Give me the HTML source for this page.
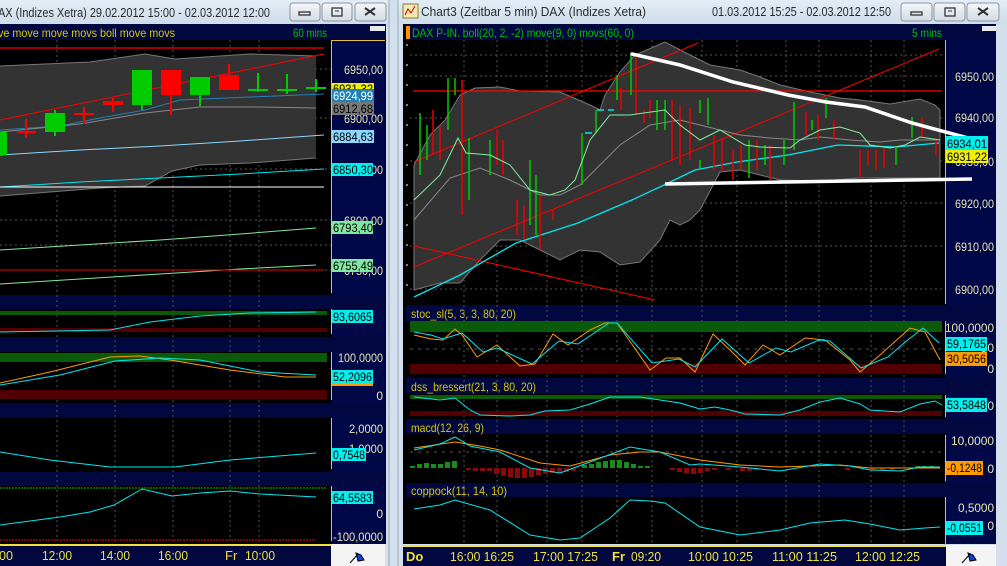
<!DOCTYPE html>
<html><head><meta charset="utf-8"><style>
html,body{margin:0;padding:0;width:1007px;height:566px;overflow:hidden;background:#d3dfec;}
svg{display:block;font-family:"Liberation Sans",sans-serif;}
</style></head><body>
<svg width="1007" height="566" viewBox="0 0 1007 566" xmlns="http://www.w3.org/2000/svg">
<defs>
<linearGradient id="tb" x1="0" y1="0" x2="0" y2="1"><stop offset="0" stop-color="#e4ecf6"/><stop offset="1" stop-color="#cfdcea"/></linearGradient>
<linearGradient id="btn" x1="0" y1="0" x2="0" y2="1"><stop offset="0" stop-color="#f4f6f9"/><stop offset="1" stop-color="#d4dbe4"/></linearGradient>
</defs>
<rect x="0" y="0" width="1007" height="566" fill="#d3dfec"/>
<rect x="0" y="0" width="389" height="23" fill="url(#tb)"/>
<rect x="398" y="0" width="609" height="23" fill="url(#tb)"/>
<line x1="389" y1="0" x2="389" y2="566" stroke="#9aa9bb"/>
<line x1="398" y1="0" x2="398" y2="566" stroke="#9aa9bb"/>
<!-- left title -->
<text x="-2" y="17" font-size="13" fill="#2a2a2a" textLength="272" lengthAdjust="spacingAndGlyphs">AX (Indizes Xetra) 29.02.2012 15:00 - 02.03.2012 12:00</text>
<g stroke="#8a96a6" fill="url(#btn)"><rect x="290" y="3" width="30" height="18" rx="3"/><rect x="322" y="3" width="30" height="18" rx="3"/><rect x="355" y="3" width="31" height="18" rx="3"/></g>
<rect x="299" y="12" width="11" height="3" fill="none" stroke="#333" stroke-width="1.3"/>
<rect x="332" y="8" width="10" height="8" fill="none" stroke="#333" stroke-width="1.3"/><line x1="335" y1="11" x2="339" y2="11" stroke="#333"/>
<path d="M365 8l10 7M375 8l-10 7" stroke="#333" stroke-width="2"/>
<!-- right title -->
<rect x="403" y="4" width="15" height="14" fill="#f3ecb0" stroke="#8a7a30"/><path d="M405 15l3-6 3 4 4-7" stroke="#c00" fill="none"/>
<text x="421" y="16" font-size="13" fill="#2a2a2a" textLength="225" lengthAdjust="spacingAndGlyphs">Chart3 (Zeitbar 5 min)  DAX (Indizes Xetra)</text>
<text x="712" y="16" font-size="13" fill="#2a2a2a" textLength="179" lengthAdjust="spacingAndGlyphs">01.03.2012 15:25 - 02.03.2012 12:50</text>
<g stroke="#8a96a6" fill="url(#btn)"><rect x="901" y="3" width="31" height="18" rx="3"/><rect x="934" y="3" width="31" height="18" rx="3"/><rect x="967" y="3" width="32" height="18" rx="3"/></g>
<rect x="911" y="12" width="11" height="3" fill="none" stroke="#333" stroke-width="1.3"/>
<rect x="945" y="8" width="10" height="8" fill="none" stroke="#333" stroke-width="1.3"/><line x1="948" y1="11" x2="952" y2="11" stroke="#333"/>
<path d="M978 8l10 7M988 8l-10 7" stroke="#333" stroke-width="2"/>

<!-- ========== LEFT WINDOW ========== -->
<rect x="0" y="24" width="386" height="520" fill="#000"/>
<rect x="0" y="24" width="386" height="16" fill="#00083f"/>
<text x="-2" y="37" font-size="12" fill="#d8c800" textLength="177" lengthAdjust="spacingAndGlyphs">ve move move movs boll move movs</text>
<text x="293" y="37" font-size="12" fill="#00c000" textLength="34" lengthAdjust="spacingAndGlyphs">60 mins</text>
<rect x="370" y="26" width="15" height="5" fill="#e8e8e8"/>
<rect x="331" y="40" width="54" height="504" fill="#000848"/>
<g stroke="#e8c040"><line x1="331.5" y1="40" x2="331.5" y2="293"/><line x1="331.5" y1="309" x2="331.5" y2="334"/><line x1="331.5" y1="352" x2="331.5" y2="400"/><line x1="331.5" y1="418" x2="331.5" y2="469"/><line x1="331.5" y1="486" x2="331.5" y2="541"/><line x1="331" y1="40.5" x2="385" y2="40.5"/></g>
<g fill="#00083f"><rect x="0" y="295" width="385" height="14"/><rect x="0" y="337" width="385" height="15"/><rect x="0" y="403" width="385" height="15"/><rect x="0" y="472" width="385" height="14"/></g>
<g stroke="#555" stroke-dasharray="2,3"><line x1="57" y1="40" x2="57" y2="541"/><line x1="115" y1="40" x2="115" y2="541"/><line x1="173" y1="40" x2="173" y2="541"/><line x1="230" y1="40" x2="230" y2="541"/><line x1="259" y1="40" x2="259" y2="541"/>
<line x1="0" y1="69" x2="331" y2="69"/><line x1="0" y1="118" x2="331" y2="118"/><line x1="0" y1="169" x2="331" y2="169"/><line x1="0" y1="220" x2="331" y2="220"/><line x1="0" y1="245" x2="331" y2="245"/><line x1="0" y1="270" x2="331" y2="270"/></g>
<path d="M0 66 L90 62 L145 54 L175 59 L250 54 L316 56 L316 158 L250 163 L200 165 L172 171 L145 186 L100 188 L50 192 L0 196 Z" fill="#333"/>
<polyline points="0,66 90,62 145,54 175,59 250,54 316,56" fill="none" stroke="#777"/>
<polyline points="316,158 250,163 200,165 172,171 145,186 100,188 50,192 0,196" fill="none" stroke="#777"/>
<line x1="0" y1="48" x2="324" y2="48" stroke="#f00" stroke-width="1.3"/>
<line x1="0" y1="120" x2="324" y2="54" stroke="#f00"/>
<polyline points="0,130 60,126 100,118 145,110 180,100 250,97 324,94" fill="none" stroke="#1e82b8"/>
<polyline points="0,132 80,124 145,113 200,107 260,107 316,108" fill="none" stroke="#888"/>
<polyline points="0,155 80,150 160,146 240,141 324,135" fill="none" stroke="#8ad8ff"/>
<polyline points="0,187 80,182 160,178 240,174 324,169" fill="none" stroke="#00e8f0"/>
<line x1="0" y1="187" x2="324" y2="187" stroke="#fff"/>
<polyline points="0,250 80,245 160,240 240,234 316,228" fill="none" stroke="#80e8a0"/>
<polyline points="0,284 80,279 160,274 240,269 316,265" fill="none" stroke="#80e8a0"/>
<line x1="0" y1="270" x2="324" y2="270" stroke="#e00"/>
<g fill="#00cc00"><rect x="0" y="132" width="7" height="23"/><rect x="45" y="113" width="20" height="19"/><rect x="132" y="70" width="20" height="35"/><rect x="190" y="77" width="20" height="18"/></g>
<g fill="#f00"><rect x="161" y="70" width="20" height="25"/><rect x="219" y="75" width="20" height="15"/><rect x="103" y="101" width="20" height="4"/></g>
<g stroke="#f00" stroke-width="2"><line x1="17" y1="132" x2="36" y2="132"/><line x1="26" y1="119" x2="26" y2="138"/><line x1="74" y1="114" x2="94" y2="114"/><line x1="84" y1="107" x2="84" y2="124"/><line x1="113" y1="98" x2="113" y2="112"/><line x1="171" y1="95" x2="171" y2="115"/><line x1="229" y1="64" x2="229" y2="75"/></g>
<g stroke="#00cc00" stroke-width="2"><line x1="55" y1="110" x2="55" y2="136"/><line x1="142" y1="105" x2="142" y2="110"/><line x1="200" y1="95" x2="200" y2="106"/><line x1="248" y1="90" x2="268" y2="90"/><line x1="258" y1="73" x2="258" y2="92"/><line x1="277" y1="90" x2="297" y2="90"/><line x1="287" y1="74" x2="287" y2="94"/><line x1="306" y1="88" x2="326" y2="88"/><line x1="316" y1="79" x2="316" y2="92"/></g>
<g font-size="12" fill="#e8e4b0" text-anchor="end" lengthAdjust="spacingAndGlyphs"><text x="383" y="74" textLength="39" lengthAdjust="spacingAndGlyphs">6950,00</text><text x="383" y="123" textLength="39" lengthAdjust="spacingAndGlyphs">6900,00</text><text x="383" y="174" textLength="39" lengthAdjust="spacingAndGlyphs">6850,00</text><text x="383" y="225" textLength="39" lengthAdjust="spacingAndGlyphs">6800,00</text><text x="383" y="275" textLength="39" lengthAdjust="spacingAndGlyphs">6750,00</text></g>
<rect x="332" y="83" width="42" height="12" fill="#f0f000"/><text x="333" y="93" font-size="12" fill="#000" textLength="40" lengthAdjust="spacingAndGlyphs">6931,32</text>
<rect x="332" y="89" width="42" height="13" fill="#1e82b8"/><text x="333" y="100" font-size="12" fill="#fff" textLength="40" lengthAdjust="spacingAndGlyphs">6924,99</text>
<rect x="332" y="102" width="42" height="13" fill="#777"/><text x="333" y="113" font-size="12" fill="#000" textLength="40" lengthAdjust="spacingAndGlyphs">6912,68</text>
<rect x="332" y="130" width="42" height="13" fill="#8ad8ff"/><text x="333" y="141" font-size="12" fill="#000" textLength="40" lengthAdjust="spacingAndGlyphs">6884,63</text>
<rect x="332" y="163" width="41" height="13" fill="#00f0f0"/><text x="333" y="174" font-size="12" fill="#000" textLength="40" lengthAdjust="spacingAndGlyphs">6850,30</text>
<rect x="332" y="221" width="41" height="13" fill="#80e8a0"/><text x="333" y="232" font-size="12" fill="#000" textLength="40" lengthAdjust="spacingAndGlyphs">6793,40</text>
<rect x="332" y="259" width="41" height="13" fill="#80e8a0"/><text x="333" y="270" font-size="12" fill="#000" textLength="40" lengthAdjust="spacingAndGlyphs">6755,49</text>
<rect x="0" y="311" width="327" height="4" fill="#0a5a0a"/><rect x="0" y="328" width="327" height="4" fill="#500000"/>
<polyline points="0,332 110,330 150,322 200,316 250,313 316,312" fill="none" stroke="#00e8f0"/>
<rect x="332" y="310" width="41" height="13" fill="#00f0f0"/><text x="333" y="321" font-size="12" fill="#000" textLength="39" lengthAdjust="spacingAndGlyphs">93,6065</text>
<rect x="0" y="353" width="327" height="9" fill="#0a5a0a"/><rect x="0" y="390" width="327" height="9" fill="#500000"/>
<polyline points="0,383 50,372 110,357 140,356 170,360 230,370 285,377 316,377" fill="none" stroke="#ff9a00"/>
<polyline points="0,385 60,375 115,361 160,358 200,360 260,372 316,375" fill="none" stroke="#00e8f0"/>
<g font-size="12" fill="#e8e4b0" text-anchor="end"><text x="383" y="362" textLength="45" lengthAdjust="spacingAndGlyphs">100,0000</text><text x="383" y="400">0</text><text x="383" y="433" textLength="34" lengthAdjust="spacingAndGlyphs">2,0000</text><text x="383" y="453" textLength="34" lengthAdjust="spacingAndGlyphs">1,0000</text><text x="383" y="518">0</text><text x="383" y="541" textLength="50" lengthAdjust="spacingAndGlyphs">-100,0000</text></g>
<rect x="332" y="370" width="41" height="13" fill="#00f0f0"/><rect x="332" y="383" width="41" height="3" fill="#ff9a00"/><text x="333" y="381" font-size="12" fill="#000" textLength="39" lengthAdjust="spacingAndGlyphs">52,2096</text>
<polyline points="0,452 50,460 110,467 175,467 230,460 316,453" fill="none" stroke="#00e8f0"/>
<rect x="332" y="448" width="34" height="13" fill="#00f0f0"/><text x="333" y="459" font-size="12" fill="#000" textLength="32" lengthAdjust="spacingAndGlyphs">0,7548</text>
<line x1="0" y1="488" x2="327" y2="488" stroke="#0c0" stroke-dasharray="2,1"/><line x1="0" y1="540" x2="316" y2="540" stroke="#e00" stroke-dasharray="2,1"/>
<polyline points="0,525 60,517 90,512 114,505 142,489 172,496 200,493 230,491 260,494 316,497" fill="none" stroke="#00e8f0"/>
<rect x="332" y="491" width="41" height="13" fill="#00f0f0"/><text x="333" y="502" font-size="12" fill="#000" textLength="39" lengthAdjust="spacingAndGlyphs">64,5583</text>
<rect x="0" y="544" width="331" height="22" fill="#00083f"/><line x1="0" y1="545" x2="331" y2="545" stroke="#f0e040" stroke-width="2"/>
<g font-size="13" fill="#f0e040"><text x="-1" y="560" textLength="14" lengthAdjust="spacingAndGlyphs">00</text><text x="42" y="560" textLength="30" lengthAdjust="spacingAndGlyphs">12:00</text><text x="100" y="560" textLength="30" lengthAdjust="spacingAndGlyphs">14:00</text><text x="158" y="560" textLength="30" lengthAdjust="spacingAndGlyphs">16:00</text><text x="225" y="560">Fr</text><text x="245" y="560" textLength="30" lengthAdjust="spacingAndGlyphs">10:00</text></g>
<rect x="331" y="544" width="54" height="22" fill="#f4f4f4"/><path d="M350 563l8-9M356 553l5 2 3 5-6 1z" stroke="#000" fill="#1040e0"/>

<!-- ========== RIGHT WINDOW ========== -->
<rect x="403" y="24" width="593" height="520" fill="#000"/>
<rect x="406" y="24" width="590" height="16" fill="#00083f"/>
<rect x="406" y="26" width="4" height="13" fill="#ff9000"/>
<text x="412" y="37" font-size="12" fill="#00c000" textLength="222" lengthAdjust="spacingAndGlyphs">DAX P-IN. boll(20, 2, -2) move(9, 0) movs(60, 0)</text>
<text x="912" y="37" font-size="12" fill="#00c000" textLength="30" lengthAdjust="spacingAndGlyphs">5 mins</text>
<rect x="982" y="26" width="14" height="5" fill="#e8e8e8"/>
<rect x="945" y="40" width="51" height="504" fill="#000848"/>
<g stroke="#e8c040"><line x1="945.5" y1="40" x2="945.5" y2="304"/><line x1="945.5" y1="321" x2="945.5" y2="374"/><line x1="945.5" y1="395" x2="945.5" y2="417"/><line x1="945.5" y1="435" x2="945.5" y2="481"/><line x1="945.5" y1="497" x2="945.5" y2="545"/></g>
<g fill="#00083f"><rect x="406" y="305" width="590" height="16"/><rect x="406" y="378" width="590" height="16"/><rect x="406" y="419" width="590" height="15"/><rect x="406" y="483" width="590" height="14"/></g>
<g font-size="12" fill="#d8c800"><text x="411" y="318" textLength="105" lengthAdjust="spacingAndGlyphs">stoc_sl(5, 3, 3, 80, 20)</text><text x="411" y="391" textLength="125" lengthAdjust="spacingAndGlyphs">dss_bressert(21, 3, 80, 20)</text><text x="411" y="432" textLength="73" lengthAdjust="spacingAndGlyphs">macd(12, 26, 9)</text><text x="411" y="495" textLength="96" lengthAdjust="spacingAndGlyphs">coppock(11, 14, 10)</text></g>
<g stroke="#fff" stroke-dasharray="2,18"><line x1="407" y1="44" x2="407" y2="304"/></g>
<g stroke="#555" stroke-dasharray="2,3"><line x1="464" y1="40" x2="464" y2="545"/><line x1="497" y1="40" x2="497" y2="545"/><line x1="547" y1="40" x2="547" y2="545"/><line x1="582" y1="40" x2="582" y2="545"/><line x1="617" y1="40" x2="617" y2="545"/><line x1="652" y1="40" x2="652" y2="545"/><line x1="702" y1="40" x2="702" y2="545"/><line x1="737" y1="40" x2="737" y2="545"/><line x1="786" y1="40" x2="786" y2="545"/><line x1="819" y1="40" x2="819" y2="545"/><line x1="871" y1="40" x2="871" y2="545"/><line x1="904" y1="40" x2="904" y2="545"/>
<line x1="410" y1="55" x2="945" y2="55"/><line x1="410" y1="76" x2="945" y2="76"/><line x1="410" y1="118" x2="945" y2="118"/><line x1="410" y1="161" x2="945" y2="161"/><line x1="410" y1="203" x2="945" y2="203"/><line x1="410" y1="246" x2="945" y2="246"/><line x1="410" y1="289" x2="945" y2="289"/></g>
<path d="M414 165 L430 135 L445 120 L460 95 L475 88 L500 87 L520 91 L560 92 L590 105 L600 110 L605 95 L620 72 L635 55 L665 42 L690 55 L710 65 L740 70 L760 77 L780 85 L810 92 L840 98 L860 100 L890 104 L920 99 L935 105 L940 110 L940 178 L900 178 L860 178 L820 181 L780 180 L760 175 L740 170 L720 172 L700 210 L690 220 L680 225 L670 220 L660 240 L640 262 L620 265 L600 252 L580 250 L560 260 L540 250 L520 240 L500 240 L480 260 L460 283 L440 283 L414 290 Z" fill="#333" stroke="#777"/>
<line x1="413" y1="91" x2="942" y2="91" stroke="#f00" stroke-width="1.3"/>
<line x1="414" y1="162" x2="698" y2="43" stroke="#f00"/>
<line x1="414" y1="267" x2="939" y2="49" stroke="#f00"/>
<line x1="414" y1="246" x2="655" y2="300" stroke="#f00"/>
<polyline points="414,220 450,178 480,168 510,180 540,195 560,195 580,185 600,165 620,145 650,125 680,120 700,125 720,130 740,135 770,138 800,140 820,137 850,140 880,142 900,140 940,140" fill="none" stroke="#888"/>
<polyline points="414,297 460,275 516,243 578,223 632,200 664,185 695,170 737,162 788,155 838,145 896,147 939,143" fill="none" stroke="#00e8f0" stroke-width="1.3"/>
<g stroke="#00cc00" stroke-width="1.5"><line x1="420" y1="113" x2="420" y2="175"/><line x1="427" y1="125" x2="427" y2="160"/><line x1="448" y1="78" x2="448" y2="130"/><line x1="455" y1="78" x2="455" y2="95"/><line x1="469" y1="138" x2="469" y2="200"/><line x1="490" y1="140" x2="490" y2="175"/><line x1="530" y1="160" x2="530" y2="225"/><line x1="536" y1="175" x2="536" y2="235"/><line x1="582" y1="133" x2="582" y2="185"/><line x1="596" y1="110" x2="596" y2="133"/><line x1="617" y1="75" x2="617" y2="100"/><line x1="631" y1="55" x2="631" y2="95"/><line x1="657" y1="100" x2="657" y2="130"/><line x1="665" y1="100" x2="665" y2="130"/><line x1="700" y1="160" x2="700" y2="168"/><line x1="708" y1="98" x2="708" y2="125"/><line x1="700" y1="100" x2="700" y2="113"/><line x1="749" y1="140" x2="749" y2="178"/><line x1="765" y1="145" x2="765" y2="165"/><line x1="784" y1="140" x2="784" y2="165"/><line x1="794" y1="102" x2="794" y2="150"/><line x1="812" y1="120" x2="812" y2="130"/><line x1="826" y1="98" x2="826" y2="118"/><line x1="896" y1="148" x2="896" y2="165"/><line x1="912" y1="117" x2="912" y2="138"/></g>
<g stroke="#ee0000" stroke-width="1.5"><line x1="433" y1="110" x2="433" y2="155"/><line x1="440" y1="125" x2="440" y2="160"/><line x1="462" y1="80" x2="462" y2="215"/><line x1="497" y1="130" x2="497" y2="165"/><line x1="503" y1="140" x2="503" y2="175"/><line x1="517" y1="200" x2="517" y2="235"/><line x1="524" y1="205" x2="524" y2="240"/><line x1="540" y1="195" x2="540" y2="250"/><line x1="553" y1="210" x2="553" y2="220"/><line x1="621" y1="88" x2="621" y2="110"/><line x1="636" y1="58" x2="636" y2="115"/><line x1="644" y1="110" x2="644" y2="123"/><line x1="650" y1="100" x2="650" y2="118"/><line x1="672" y1="100" x2="672" y2="160"/><line x1="680" y1="105" x2="680" y2="165"/><line x1="690" y1="108" x2="690" y2="160"/><line x1="714" y1="135" x2="714" y2="170"/><line x1="722" y1="138" x2="722" y2="172"/><line x1="733" y1="150" x2="733" y2="180"/><line x1="741" y1="145" x2="741" y2="170"/><line x1="757" y1="140" x2="757" y2="170"/><line x1="770" y1="145" x2="770" y2="180"/><line x1="806" y1="112" x2="806" y2="135"/><line x1="818" y1="115" x2="818" y2="140"/><line x1="834" y1="120" x2="834" y2="140"/><line x1="860" y1="150" x2="860" y2="178"/><line x1="868" y1="150" x2="868" y2="165"/><line x1="876" y1="150" x2="876" y2="170"/><line x1="884" y1="148" x2="884" y2="168"/><line x1="922" y1="117" x2="922" y2="137"/><line x1="936" y1="140" x2="936" y2="155"/></g>
<g stroke="#00e8f0" stroke-width="1.5"><line x1="585" y1="133" x2="592" y2="133"/><line x1="597" y1="110" x2="604" y2="110"/><line x1="608" y1="110" x2="614" y2="110"/></g>
<polyline points="414,200 440,175 458,138 466,153 490,155 500,160 510,165 530,190 550,195 565,190 575,180 590,140 610,115 630,115 665,110 680,125 700,140 720,130 745,145 760,147 790,148 800,140 820,130 840,127 860,133 870,145 890,148 905,145 920,137 940,140" fill="none" stroke="#80f0a0"/>
<polyline points="632,54 680,65 733,82 788,95 826,102 865,107 912,123 968,138" fill="none" stroke="#fff" stroke-width="3.5" stroke-linecap="round"/>
<line x1="665" y1="184" x2="972" y2="179" stroke="#fff" stroke-width="3.5"/>
<g font-size="12" fill="#e8e4b0" text-anchor="end"><text x="994" y="81" textLength="39" lengthAdjust="spacingAndGlyphs">6950,00</text><text x="994" y="122" textLength="39" lengthAdjust="spacingAndGlyphs">6940,00</text><text x="994" y="166" textLength="39" lengthAdjust="spacingAndGlyphs">6930,00</text><text x="994" y="208" textLength="39" lengthAdjust="spacingAndGlyphs">6920,00</text><text x="994" y="251" textLength="39" lengthAdjust="spacingAndGlyphs">6910,00</text><text x="994" y="294" textLength="39" lengthAdjust="spacingAndGlyphs">6900,00</text></g>
<rect x="946" y="136" width="42" height="15" fill="#00f0f0"/><text x="947" y="148" font-size="12" fill="#000" textLength="40" lengthAdjust="spacingAndGlyphs">6934,01</text>
<rect x="946" y="150" width="42" height="13" fill="#f0f000"/><text x="947" y="161" font-size="12" fill="#000" textLength="40" lengthAdjust="spacingAndGlyphs">6931,22</text>
<rect x="410" y="321" width="532" height="11" fill="#0a5a0a"/><rect x="410" y="364" width="532" height="10" fill="#500000"/>
<line x1="410" y1="349" x2="942" y2="349" stroke="#555" stroke-dasharray="3,5"/>
<polyline points="414,335 431,339 443,340 455,329 462,335 477,357 497,345 520,366 535,364 553,334 568,345 590,330 605,323 617,323 650,370 666,358 680,358 695,372 713,334 730,350 745,365 763,345 780,355 805,338 825,340 850,360 860,372 880,355 910,328 925,332 940,360" fill="none" stroke="#ff9a00"/>
<polyline points="414,332 431,335 443,339 462,333 483,352 497,348 532,364 559,341 578,344 609,323 617,323 652,363 679,359 695,367 722,339 749,363 776,348 791,352 819,340 830,341 861,368 888,357 904,343 923,328 939,343" fill="none" stroke="#00e8f0"/>
<g font-size="12" fill="#e8e4b0" text-anchor="end"><text x="994" y="332" textLength="49" lengthAdjust="spacingAndGlyphs">100,0000</text><text x="994" y="352">50</text><text x="994" y="373">0</text><text x="994" y="410">50</text><text x="994" y="445" textLength="43" lengthAdjust="spacingAndGlyphs">10,0000</text><text x="994" y="473">0</text><text x="994" y="512" textLength="36" lengthAdjust="spacingAndGlyphs">0,5000</text><text x="994" y="530">0</text></g>
<rect x="946" y="337" width="41" height="14" fill="#00f0f0"/><text x="947" y="348" font-size="12" fill="#000" textLength="39" lengthAdjust="spacingAndGlyphs">59,1765</text>
<rect x="946" y="352" width="41" height="14" fill="#ff9a00"/><text x="947" y="363" font-size="12" fill="#000" textLength="39" lengthAdjust="spacingAndGlyphs">30,5056</text>
<rect x="410" y="395" width="532" height="4" fill="#0a5a0a"/><rect x="410" y="411" width="532" height="5" fill="#500000"/>
<polyline points="414,397 440,400 455,398 470,410 480,415 510,416 530,415 545,411 570,410 590,404 610,397 640,397 660,400 680,403 700,409 715,407 730,410 745,414 780,415 800,410 820,402 840,398 860,404 870,410 900,412 920,404 935,401 942,405" fill="none" stroke="#00e8f0"/>
<rect x="946" y="398" width="41" height="14" fill="#00f0f0"/><text x="947" y="409" font-size="12" fill="#000" textLength="39" lengthAdjust="spacingAndGlyphs">53,5848</text>
<line x1="410" y1="452" x2="942" y2="452" stroke="#555" stroke-dasharray="3,5"/>
<g fill="#1a8a1a"><rect x="410" y="466" width="5" height="2"/><rect x="417" y="464" width="5" height="4"/><rect x="424" y="463" width="5" height="5"/><rect x="431" y="464" width="5" height="4"/><rect x="438" y="464" width="5" height="4"/><rect x="445" y="462" width="5" height="6"/><rect x="452" y="461" width="5" height="7"/><rect x="582" y="465" width="5" height="3"/><rect x="589" y="464" width="5" height="4"/><rect x="596" y="462" width="5" height="6"/><rect x="603" y="461" width="5" height="7"/><rect x="610" y="460" width="5" height="8"/><rect x="617" y="460" width="5" height="8"/><rect x="624" y="462" width="5" height="6"/><rect x="631" y="464" width="5" height="4"/><rect x="638" y="466" width="5" height="2"/><rect x="645" y="466" width="5" height="2"/><rect x="915" y="466" width="5" height="2"/><rect x="922" y="466" width="5" height="2"/><rect x="929" y="466" width="5" height="2"/></g>
<g fill="#8a0a0a"><rect x="466" y="468" width="5" height="2"/><rect x="473" y="468" width="5" height="3"/><rect x="480" y="468" width="5" height="3"/><rect x="487" y="468" width="5" height="3"/><rect x="494" y="468" width="5" height="6"/><rect x="501" y="468" width="5" height="8"/><rect x="508" y="468" width="5" height="9"/><rect x="515" y="468" width="5" height="10"/><rect x="522" y="468" width="5" height="10"/><rect x="529" y="468" width="5" height="9"/><rect x="536" y="468" width="5" height="7"/><rect x="543" y="468" width="5" height="6"/><rect x="550" y="468" width="5" height="5"/><rect x="557" y="468" width="5" height="5"/><rect x="564" y="468" width="5" height="4"/><rect x="571" y="468" width="5" height="3"/><rect x="670" y="468" width="5" height="2"/><rect x="677" y="468" width="5" height="4"/><rect x="684" y="468" width="5" height="5"/><rect x="691" y="468" width="5" height="6"/><rect x="698" y="468" width="5" height="5"/><rect x="705" y="468" width="5" height="3"/><rect x="712" y="468" width="5" height="2"/><rect x="726" y="468" width="5" height="2"/><rect x="740" y="468" width="5" height="3"/><rect x="747" y="468" width="5" height="3"/><rect x="754" y="468" width="5" height="2"/><rect x="845" y="468" width="5" height="2"/><rect x="870" y="468" width="5" height="2"/><rect x="880" y="468" width="5" height="3"/><rect x="890" y="468" width="5" height="2"/></g>
<polyline points="414,448 455,442 480,446 500,450 540,463 570,466 610,455 640,452 660,452 700,460 740,465 780,467 840,465 870,468 940,468" fill="none" stroke="#ff9a00"/>
<polyline points="414,450 440,444 455,437 470,446 500,452 530,468 560,473 590,462 630,447 660,452 690,465 700,464 740,467 780,471 820,464 850,466 870,470 900,471 920,467 940,467" fill="none" stroke="#00e8f0"/>
<rect x="946" y="461" width="37" height="14" fill="#ff9a00"/><text x="947" y="472" font-size="12" fill="#000" textLength="35" lengthAdjust="spacingAndGlyphs">-0,1248</text>
<polyline points="414,509 440,505 455,500 465,503 490,510 530,535 560,540 580,538 610,518 630,500 650,501 665,503 700,527 740,535 780,530 810,523 845,520 870,524 900,530 925,528 940,527" fill="none" stroke="#00e8f0"/>
<rect x="946" y="521" width="37" height="14" fill="#00f0f0"/><text x="947" y="532" font-size="12" fill="#000" textLength="35" lengthAdjust="spacingAndGlyphs">-0,0551</text>
<rect x="403" y="545" width="543" height="21" fill="#00083f"/><line x1="403" y1="546" x2="946" y2="546" stroke="#f0e040" stroke-width="2"/>
<g font-size="13" fill="#f0e040"><text x="406" y="561" font-weight="bold">Do</text><text x="450" y="561" textLength="64" lengthAdjust="spacingAndGlyphs">16:00 16:25</text><text x="533" y="561" textLength="65" lengthAdjust="spacingAndGlyphs">17:00 17:25</text><text x="612" y="561" font-weight="bold">Fr</text><text x="631" y="561" textLength="30" lengthAdjust="spacingAndGlyphs">09:20</text><text x="688" y="561" textLength="65" lengthAdjust="spacingAndGlyphs">10:00 10:25</text><text x="772" y="561" textLength="65" lengthAdjust="spacingAndGlyphs">11:00 11:25</text><text x="855" y="561" textLength="65" lengthAdjust="spacingAndGlyphs">12:00 12:25</text></g>
<rect x="946" y="545" width="50" height="21" fill="#f4f4f4"/><path d="M962 563l8-9M968 553l5 2 3 5-6 1z" stroke="#000" fill="#1040e0"/>
</svg>
</body></html>
